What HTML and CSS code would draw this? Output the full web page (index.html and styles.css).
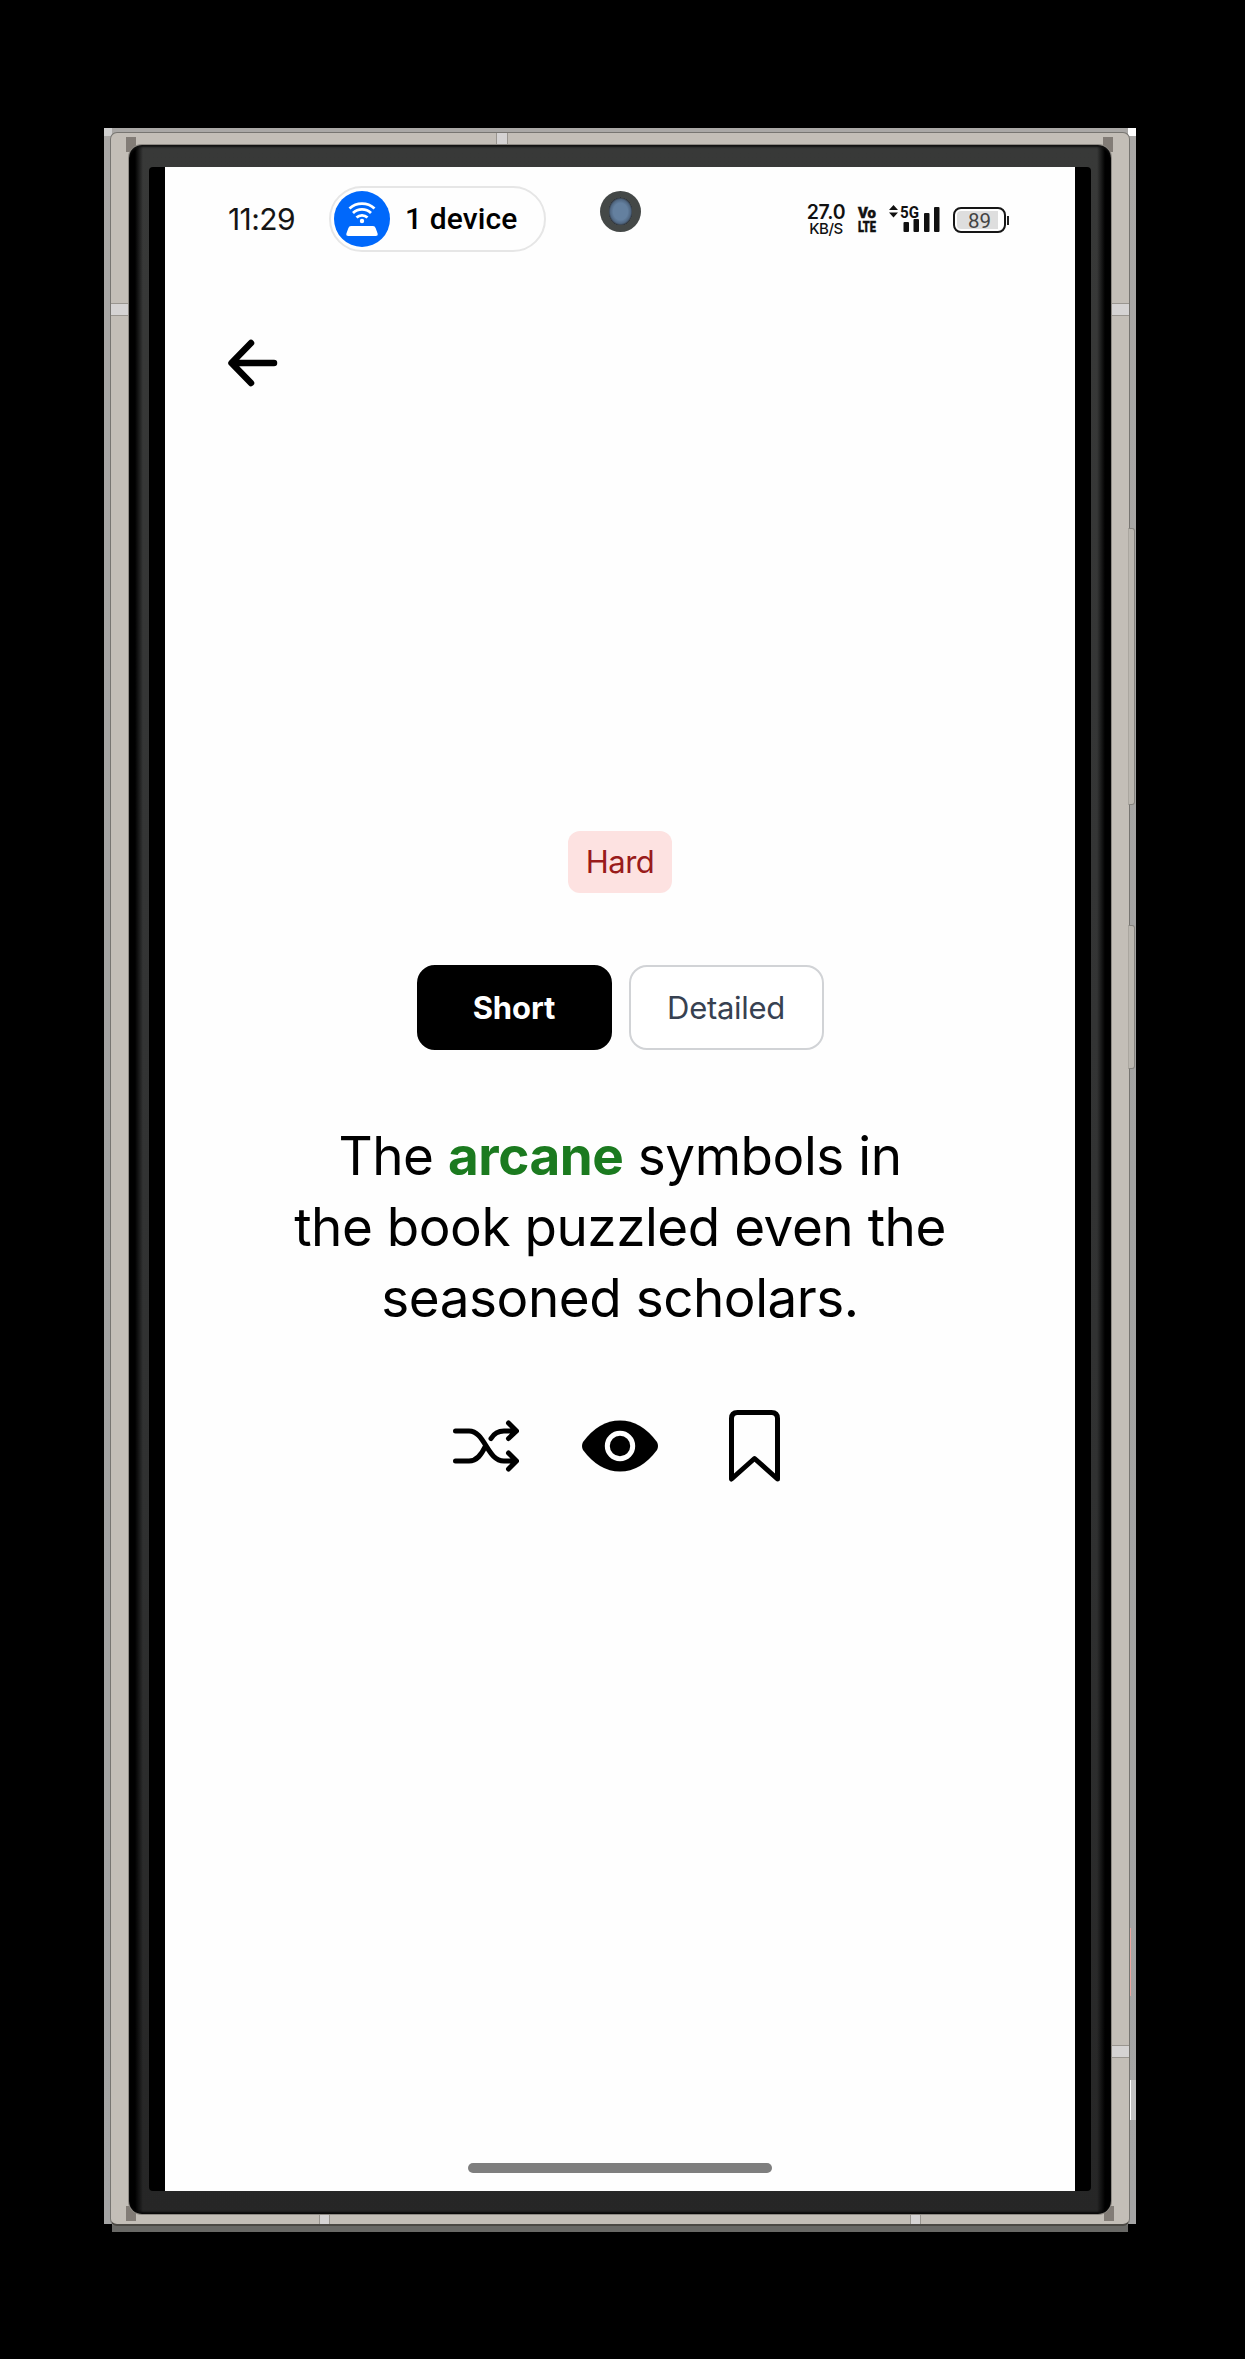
FILE: index.html
```html
<!DOCTYPE html>
<html lang="en">
<head>
<meta charset="utf-8">
<title>Arcane</title>
<link rel="stylesheet" href="styles.css">
</head>
<body>
<div class="phone">
  <i class="corner tl"></i><i class="corner tr"></i><i class="corner bl"></i><i class="corner br"></i>
  <i class="key volume"></i><i class="key power"></i><i class="glint"></i><i class="tint"></i>
  <div class="metal">
    <i class="shade s-tl"></i><i class="shade s-tr"></i><i class="shade s-bl"></i><i class="shade s-br"></i>
    <i class="band side left upper"></i><i class="band side right upper"></i><i class="band side right lower"></i>
    <i class="band top"></i><i class="band bottom first"></i><i class="band bottom second"></i>
    <div class="bezel">
      <div class="glass">
        <div class="screen">
          <i class="camera"></i>
          <header class="status">
            <span class="clock">11:29</span>
            <div class="pill">
              <svg class="hotspot" viewBox="0 0 56 56"><circle cx="28" cy="28" r="28" fill="#0068fb"/><g fill="none" stroke="#fff" stroke-width="2.800"><path d="M15.500 17.500a18.500 18.500 0 0 1 25 0M19 22a13 13 0 0 1 18 0M22.500 26.500a8 8 0 0 1 11 0"/></g><circle cx="28" cy="30" r="2.200" fill="#fff"/><path fill="#fff" d="M17 35h22q2 0 2.600 2l2 5.500q.6 2.500-2 2.500h-27.200q-2.600 0-2-2.500l2-5.500q.6-2 2.600-2z"/></svg>
              <span class="device">1 device</span>
            </div>
            <div class="net">
              <div class="speed"><b>27.0</b><span>KB/S</span></div>
              <svg class="volte" viewBox="0 0 20 30"><text x="0" y="13" textLength="18" lengthAdjust="spacingAndGlyphs">Vo</text><text x="0" y="26.500" textLength="18" lengthAdjust="spacingAndGlyphs">LTE</text></svg>
              <svg class="signal" viewBox="0 0 52 30"><path d="M4.500 0l4.500 5h-9zM4.500 12.500l4.500-5h-9z"/><text x="11" y="12.500" textLength="19" lengthAdjust="spacingAndGlyphs">5G</text><rect x="14.500" y="17" width="5.500" height="10" rx="1"/><rect x="24.500" y="14" width="5.500" height="13" rx="1"/><rect x="35" y="8" width="5.500" height="19" rx="1"/><rect x="45" y="2" width="5.500" height="25" rx="1"/></svg>
              <div class="battery"><span>89</span></div>
            </div>
          </header>
          <svg class="back" viewBox="0 0 50 48"><path d="M46 24H4M23 4L3.500 24L23 44"/></svg>
          <main class="card">
            <span class="level">Hard</span>
            <div class="tabs"><button class="tab active">Short</button><button class="tab">Detailed</button></div>
            <p class="sentence">The <strong>arcane</strong> symbols in<br>the book puzzled even the<br>seasoned scholars.</p>
            <div class="actions">
              <svg class="shuffle" viewBox="0 0 66 52"><path d="M2.500 11H16C32 11 34 41 51 41H62M2.500 41H16C24 41 28.500 34.500 32.500 26M38 18.500C41 13.500 45 11 51 11H62M55.500 3L63.500 11L55.500 18.500M55.500 33L63.500 41L55.500 49"/></svg>
              <svg class="eye" viewBox="0 0 76 52"><path d="M1 22Q17 .500 38 .500T75 22Q77 26 75 30Q59 51.500 38 51.500T1 30Q-1 26 1 22z"/><circle cx="38" cy="26" r="12.700" fill="none" stroke="#fff" stroke-width="5"/></svg>
              <svg class="bookmark" viewBox="0 0 51 72"><path d="M2.500 69V8.500Q2.500 2.500 8.500 2.500H42.500Q48.500 2.500 48.500 8.500V69L25.500 48.500Z"/></svg>
            </div>
          </main>
          <i class="home"></i>
        </div>
      </div>
    </div>
  </div>
</div>
</body>
</html>
```

FILE: styles.css
```css
* { box-sizing: border-box; }
body { margin: 0; background: #000; width: 1245px; height: 2359px; padding: 128px 0 0 104px; font-family: Inter, "Liberation Sans", sans-serif; }
svg { display: block; flex: none; }

.phone { position: relative; width: 1032px; height: 2104px; padding: 4px 6px 6px; background: linear-gradient(#aaa8a6, #a3a3a2 50%, #a5a5a5 99.6%, #696966 99.7%); }
.corner { position: absolute; width: 8px; height: 8px; background: #000; }
.tl { left: 0; top: 0; background: #d0d0d0; }
.tr { right: 0; top: 0; background: #fff; }
.bl { left: 0; bottom: 0; }
.br { right: 0; bottom: 0; }
.key { position: absolute; z-index: 1; right: 1px; width: 7px; background: #bbb7b0; border: 1px solid #85837e; border-left-color: #aaa69f; border-radius: 0 3px 3px 0; }
.volume { top: 400px; height: 277px; }
.power { top: 797px; height: 144px; }
.glint { position: absolute; right: 0; top: 1952px; width: 6px; height: 40px; background: #c2c2c2; border-left: 1px solid #fff; }
.tint { position: absolute; z-index: 1; right: 5px; top: 1800px; width: 1px; height: 68px; background: #eca7a1; }

.metal { position: relative; width: 1020px; height: 2094px; padding: 12px 18px 11px; background: #c3beb7; border: 1px solid #777571; border-bottom: 2px solid #4b4944; border-radius: 7px; }
.shade { position: absolute; width: 10px; height: 15px; background: #827c76; }
.s-tl { left: 15px; top: 4px; }
.s-tr { right: 16px; top: 4px; }
.s-bl { left: 15px; bottom: 3px; }
.s-br { right: 15px; bottom: 3px; }
.band { position: absolute; background: #d5d3d3; border: 0 solid #99958f; }
.side { width: 18px; height: 13px; border-width: 1px 0; }
.left { left: 0; }
.right { right: 0; }
.upper { top: 170px; }
.lower { top: 1912px; }
.top { left: 385px; top: 0; width: 12px; height: 12px; border-width: 0 1px; }
.bottom { bottom: 0; width: 11px; height: 12px; border-width: 0 1px; }
.first { left: 208px; }
.second { left: 799px; }

.bezel { position: relative; width: 982px; height: 2069px; padding: 22px 20px; border-radius: 13px; background: linear-gradient(90deg, #000 6px, transparent 14px, transparent 968px, #000 976px), linear-gradient(#383938, #343535 35%, #303131 65%, #262626); box-shadow: 0 0 0 1px #8e8a84, inset 0 2px 2px #111, inset 0 -2px 2px #080808; }
.glass { width: 942px; height: 2024px; padding: 0 16px; background: #000; border-radius: 4px; }
.screen { position: relative; display: flex; flex-direction: column; width: 910px; height: 2024px; background: #fefefe; }
.camera { position: absolute; left: 435px; top: 24px; width: 41px; height: 41px; border-radius: 50%; background: radial-gradient(ellipse 12px 14px at 50% 50%, #64809f 0 60%, #506782 85%, #303439 100%, transparent), #444847; }

.status { display: flex; align-items: center; height: 66px; margin: 19px 66px 0 63px; }
.clock { width: 101px; font-size: 30px; line-height: 36px; letter-spacing: -.6px; color: #151515; }
.pill { display: flex; align-items: center; gap: 15px; width: 217px; height: 66px; padding-left: 3px; border: 2px solid #e6e6e6; border-radius: 33px; }
.hotspot { width: 56px; height: 56px; }
.device { font: 500 30px/36px Roboto, sans-serif; letter-spacing: .1px; white-space: nowrap; }
.net { display: flex; align-items: center; margin-left: auto; height: 30px; color: #111; }
.speed { display: flex; flex-direction: column; align-items: center; width: 40px; margin: 3px 12px 0 0; }
.speed b { font: 600 19.500px/17px Inter, sans-serif; letter-spacing: -.2px; }
.speed span { font: 500 15px/16px Inter, sans-serif; letter-spacing: -.5px; }
.volte { width: 20px; height: 30px; margin: 2px 11px 0 0; fill: #111; stroke: #111; stroke-width: .5px; font: 900 15.500px Roboto, sans-serif; overflow: visible; }
.signal { width: 52px; height: 30px; margin: 2px 12px 0 0; fill: #111; font: 700 17px Roboto, sans-serif; overflow: visible; }
.battery { position: relative; display: grid; place-items: center; width: 53px; height: 26px; margin: 1px 3px 0 0; border: 2px solid #161616; border-radius: 8px; background: linear-gradient(90deg, #dedede 41px, #fff 41px) content-box; padding: 2px; font: 20.500px/20px Roboto, sans-serif; color: #444; }
.battery::after { content: ""; position: absolute; right: -5px; top: 7px; width: 2px; height: 9px; background: #222; }

.back { width: 50px; height: 48px; margin: 87px 0 0 63px; fill: none; stroke: #000; stroke-width: 6.500px; stroke-linecap: round; stroke-linejoin: round; }

.card { display: flex; flex-direction: column; align-items: center; margin-top: 444px; }
.level { width: 104px; height: 62px; border-radius: 12px; background: #fde2e1; color: #991b1b; font-size: 31px; line-height: 61px; letter-spacing: -.5px; text-align: center; }
.tabs { display: flex; gap: 17px; margin-top: 72px; }
.tab { width: 195px; height: 85px; padding: 0; border: 2px solid #d1d3d6; border-radius: 18px; background: #fff; color: #374151; font: 400 31px/80px Inter, sans-serif; letter-spacing: -.3px; }
.active { border-color: #000; background: #000; color: #fff; font-weight: 700; letter-spacing: -.1px; }
.sentence { margin: 71px 0 0; font-size: 53px; line-height: 71px; letter-spacing: -.460px; text-align: center; white-space: nowrap; color: #000; }
.sentence strong { color: #1b7a1f; font-weight: 700; }
.actions { display: flex; align-items: center; margin: 76px 0 0 -7px; }
.shuffle, .bookmark { fill: none; stroke: #000; stroke-width: 5px; stroke-linecap: round; stroke-linejoin: round; }
.shuffle { width: 66px; height: 52px; }
.eye { width: 76px; height: 52px; margin: 0 71px 0 63px; }
.bookmark { width: 51px; height: 72px; }

.home { width: 304px; height: 10px; margin: auto auto 18px; border-radius: 5px; background: #7e7e7e; }
```
